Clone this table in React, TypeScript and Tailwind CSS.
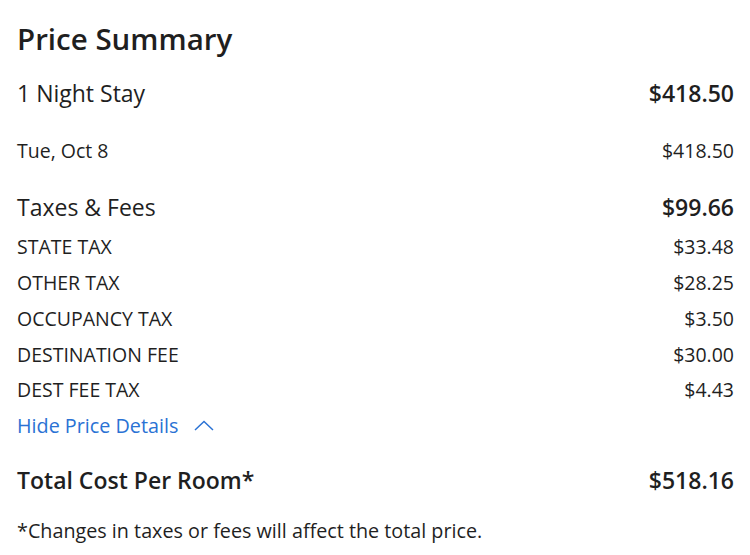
const taxes = [
  { label: 'STATE TAX', amount: '$33.48' },
  { label: 'OTHER TAX', amount: '$28.25' },
  { label: 'OCCUPANCY TAX', amount: '$3.50' },
  { label: 'DESTINATION FEE', amount: '$30.00' },
  { label: 'DEST FEE TAX', amount: '$4.43' },
];

export default function App() {
  return (
    <main className="min-h-screen bg-white px-[17px] pr-4 pt-[19px] text-[#1f1f1f] font-['Open_Sans',sans-serif]">
      <h1 className="text-[29.5px] font-semibold leading-[40px]">Price Summary</h1>

      <div className="mt-[14px] flex justify-between items-center h-[40px]">
        <span className="text-[23px]">1 Night Stay</span>
        <span className="text-[23px] font-semibold">$418.50</span>
      </div>

      <div className="mt-[18px] flex justify-between items-center h-[40px] text-[19.5px]">
        <span>Tue, Oct 8</span>
        <span>$418.50</span>
      </div>

      <div className="mt-[16px] flex justify-between items-center h-[40px]">
        <span className="text-[23px]">Taxes &amp; Fees</span>
        <span className="text-[23px] font-semibold">$99.66</span>
      </div>

      <div className="mt-[2px]">
        {taxes.map(t => (
          <div key={t.label} className="flex justify-between items-center h-[35.75px] text-[19.5px]">
            <span>{t.label}</span>
            <span>{t.amount}</span>
          </div>
        ))}
      </div>

      <button className="flex items-center gap-[16px] h-[36px] text-[19.75px] text-[#2a72d4]">
        Hide Price Details
        <svg width="20" height="11" viewBox="0 0 20 11" fill="none" stroke="currentColor" strokeWidth="1.5">
          <polyline points="1,10 10,1.5 19,10" />
        </svg>
      </button>

      <div className="mt-[16px] flex justify-between items-center h-[40px] text-[23px] font-semibold">
        <span>Total Cost Per Room*</span>
        <span>$518.16</span>
      </div>

      <p className="mt-[13px] text-[19.75px] leading-[36px]">*Changes in taxes or fees will affect the total price.</p>
    </main>
  );
}
